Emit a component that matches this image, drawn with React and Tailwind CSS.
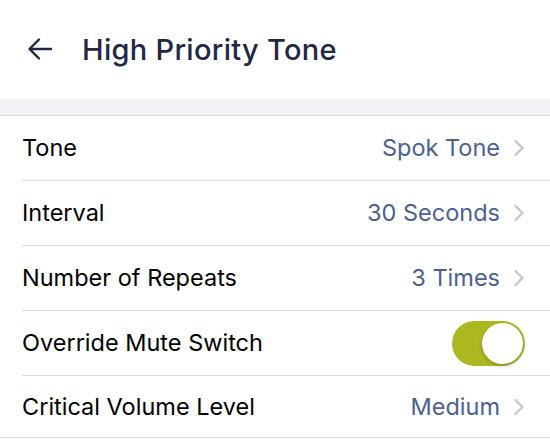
import { useState } from "react";

const rows = [
    { label: "Tone", value: "Spok Tone" },
    { label: "Interval", value: "30 Seconds" },
    { label: "Number of Repeats", value: "3 Times" },
    { label: "Override Mute Switch", toggle: true },
    { label: "Critical Volume Level", value: "Medium" },
];

function Chevron() {
    return (
        <svg width="12" height="18" viewBox="0 0 12 18" fill="none" aria-hidden>
            <path d="M2.5 2l7 7-7 7" stroke="#c7c7cc" strokeWidth="2.4" strokeLinecap="round" strokeLinejoin="round" />
        </svg>
    );
}

function Toggle({ on, onChange }) {
    return (
        <button
            type="button"
            onClick={() => onChange(!on)}
            className={`relative w-[73px] h-[45px] rounded-full ${on ? "bg-[#abb822]" : "bg-[#e5e5ea]"}`}
        >
            <span
                className={`absolute top-[2px] h-[41px] w-[41px] rounded-full bg-white shadow-[0_2px_4px_rgba(0,0,0,0.2)] ${on ? "right-[2px]" : "left-[2px]"}`}
            />
        </button>
    );
}

export default function App() {
    const [mute, setMute] = useState(true);

    return (
        <div className="w-[550px] h-[439px] bg-white overflow-hidden font-['Inter',sans-serif]">
            {/* header */}
            <div className="h-[99px] flex items-center pl-[27px]">
                <svg width="26" height="24" viewBox="0 0 26 24" fill="none" aria-hidden className="mt-[-2px]">
                    <path d="M24 12H3M12 2.5L2.5 12l9.5 9.5" stroke="#1f2844" strokeWidth="2.4" strokeLinecap="round" strokeLinejoin="round" />
                </svg>
                <h1 className="ml-[29px] text-[29px] font-medium text-[#1f2844] tracking-[0.3px]">High Priority Tone</h1>
            </div>
            <div className="h-[16px] bg-[#f2f2f7]" />

            {/* settings list */}
            <div className="border-t border-[#d8d8dc]">
                {rows.map((r, i) => (
                    <div key={r.label} className={`pl-[22px] ${i === rows.length - 1 ? "border-b border-[#d8d8dc]" : ""}`}>
                        <div
                            className={`flex items-center justify-between pr-[25px] ${i === rows.length - 1 ? "h-[61px]" : "h-[65px] border-b border-[#dcdce0]"}`}
                        >
                            <span className="text-[23.5px] text-black">{r.label}</span>
                            {r.toggle ? (
                                <Toggle on={mute} onChange={setMute} />
                            ) : (
                                <div className="flex items-center gap-[13px]">
                                    <span className="text-[23.5px] text-[#4b6192]">{r.value}</span>
                                    <Chevron />
                                </div>
                            )}
                        </div>
                    </div>
                ))}
            </div>
        </div>
    );
}
